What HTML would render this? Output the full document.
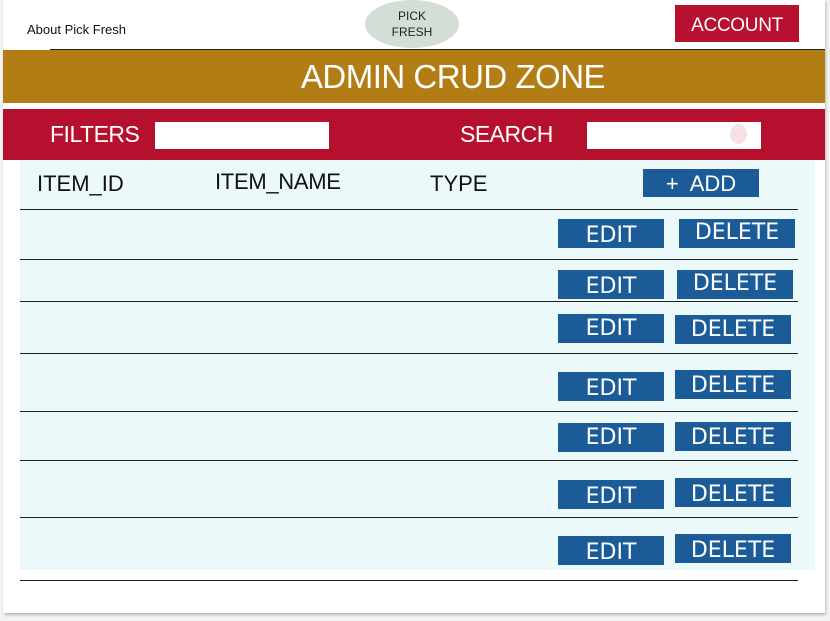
<!DOCTYPE html>
<html><head><meta charset="utf-8"><style>
*{margin:0;padding:0;box-sizing:border-box}
body{width:830px;height:621px;background:#f4f4f4;position:relative;overflow:hidden;font-family:"Liberation Sans",sans-serif}
.card{position:absolute;left:3px;top:0;width:822px;height:613px;background:#fff;box-shadow:1px 2px 3px rgba(0,0,0,.25)}
.a{position:absolute}
.btn{position:absolute;background:#1b5c98;color:#fff;font-family:"DejaVu Sans",sans-serif;font-size:22px;text-align:center;height:29px;line-height:33px;overflow:hidden}
.ln{position:absolute;left:20px;width:778px;height:1px;background:#222}
</style></head><body>
<div class="card"></div>
<div class="a" style="left:27px;top:22px;font-size:13px;color:#111">About Pick Fresh</div>
<div class="a" style="left:365px;top:0;width:94px;height:48px;border-radius:50%;background:#d3dfd6"></div>
<div class="a" style="left:365px;top:8px;width:94px;text-align:center;font-size:12px;line-height:16px;color:#222">PICK<br>FRESH</div>
<div class="a" style="left:675px;top:5px;width:124px;height:37px;background:#b8102f;color:#fff;font-size:19px;text-align:center;line-height:42px;letter-spacing:-0.3px">ACCOUNT</div>
<div class="a" style="left:50px;top:49px;width:775px;height:1px;background:#222"></div>
<div class="a" style="left:3px;top:50px;width:822px;height:53px;background:#b27d14;color:#fff;font-size:33px;text-align:center;line-height:54px;padding-left:78px;letter-spacing:-0.5px">ADMIN CRUD ZONE</div>
<div class="a" style="left:3px;top:109px;width:822px;height:51px;background:#b5112f"></div>
<div class="a" style="left:50px;top:121px;color:#fff;font-size:23px;letter-spacing:-0.5px">FILTERS</div>
<div class="a" style="left:155px;top:122px;width:174px;height:27px;background:#fff"></div>
<div class="a" style="left:460px;top:121px;color:#fff;font-size:23px;letter-spacing:-0.5px">SEARCH</div>
<div class="a" style="left:587px;top:122px;width:174px;height:27px;background:#fff"></div>
<div class="a" style="left:730px;top:124px;width:17px;height:20px;border-radius:50%;background:#f6e2e4"></div>
<div class="a" style="left:20px;top:160px;width:795px;height:410px;background:#ebf9fa"></div>
<div class="a" style="left:37px;top:171px;font-size:22px;color:#111">ITEM_ID</div>
<div class="a" style="left:215px;top:169px;font-size:22px;color:#111;letter-spacing:-0.3px">ITEM_NAME</div>
<div class="a" style="left:430px;top:171px;font-size:22px;color:#111">TYPE</div>
<div class="a" style="left:643px;top:169px;width:116px;height:28px;background:#1b5c98;color:#fff;font-size:22px;line-height:29px;text-align:center">+&nbsp; ADD</div>
<div class="ln" style="top:209px"></div>
<div class="ln" style="top:259px"></div>
<div class="ln" style="top:301px"></div>
<div class="ln" style="top:353px"></div>
<div class="ln" style="top:411px"></div>
<div class="ln" style="top:460px"></div>
<div class="ln" style="top:517px"></div>
<div class="ln" style="top:580px"></div>
<div class="btn" style="left:558px;top:219px;width:106px">EDIT</div>
<div class="btn" style="left:679px;top:219px;width:116px;line-height:28px">DELETE</div>
<div class="btn" style="left:558px;top:270px;width:106px">EDIT</div>
<div class="btn" style="left:677px;top:270px;width:116px;line-height:27px">DELETE</div>
<div class="btn" style="left:558px;top:314px;width:106px;line-height:30px">EDIT</div>
<div class="btn" style="left:675px;top:315px;width:116px;line-height:30px">DELETE</div>
<div class="btn" style="left:558px;top:372px;width:106px">EDIT</div>
<div class="btn" style="left:675px;top:370px;width:116px;line-height:32px">DELETE</div>
<div class="btn" style="left:558px;top:423px;width:106px;line-height:30px">EDIT</div>
<div class="btn" style="left:675px;top:422px;width:116px;line-height:31px">DELETE</div>
<div class="btn" style="left:558px;top:480px;width:106px">EDIT</div>
<div class="btn" style="left:675px;top:478px;width:116px;line-height:33px">DELETE</div>
<div class="btn" style="left:558px;top:536px;width:106px">EDIT</div>
<div class="btn" style="left:675px;top:534px;width:116px;line-height:33px">DELETE</div>
</body></html>
